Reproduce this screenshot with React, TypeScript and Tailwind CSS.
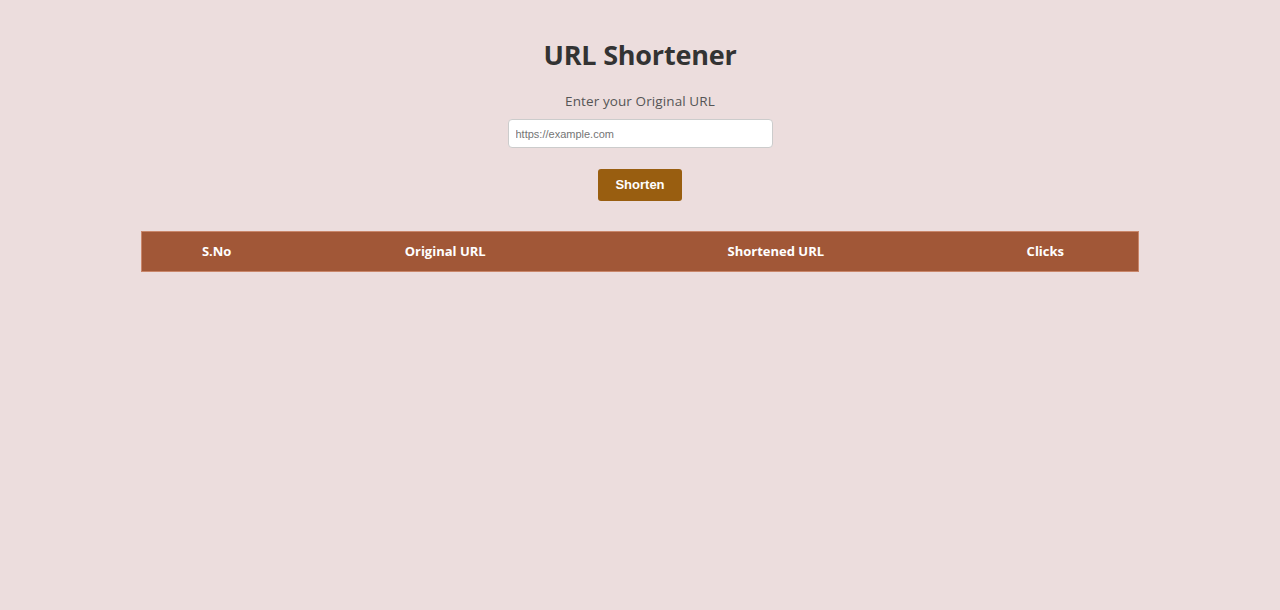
import React from "react";

export default function App() {
  return (
    <div className="min-h-[610px] w-full bg-[#ecdddd] font-['Open_Sans',sans-serif]">
      <div className="flex flex-col items-center pt-[36px]">
        <h1 className="text-[27px] leading-[38px] font-bold text-[#333333] tracking-[-0.2px]">URL Shortener</h1>
        <label className="mt-[18px] text-[13.5px] leading-[18px] text-[#555555] tracking-[0.1px]">Enter your Original URL</label>
        <input
          type="text"
          placeholder="https://example.com"
          className="mt-[9px] h-[29px] w-[265px] rounded-[4px] border border-[#cccccc] bg-white px-[7px] font-['Liberation_Sans',Arial,sans-serif] text-[11px] text-[#333] placeholder:text-[#757575] outline-none"
        />
        <button className="mt-[21px] h-[32px] w-[84px] rounded-[3px] bg-[#995e10] font-['Liberation_Sans',Arial,sans-serif] text-[13px] font-bold text-white">
          Shorten
        </button>
      </div>
      <div className="mt-[30px] flex justify-center">
        <table className="w-[998px] border-collapse border border-[#c9866a]">
          <thead>
            <tr className="h-[40px] bg-[#a15737] text-[13px] font-bold text-white">
              <th className="w-[150px] font-bold">S.No</th>
              <th className="w-[308px] font-bold">Original URL</th>
              <th className="w-[354px] font-bold">Shortened URL</th>
              <th className="w-[186px] font-bold">Clicks</th>
            </tr>
          </thead>
          <tbody></tbody>
        </table>
      </div>
    </div>
  );
}
